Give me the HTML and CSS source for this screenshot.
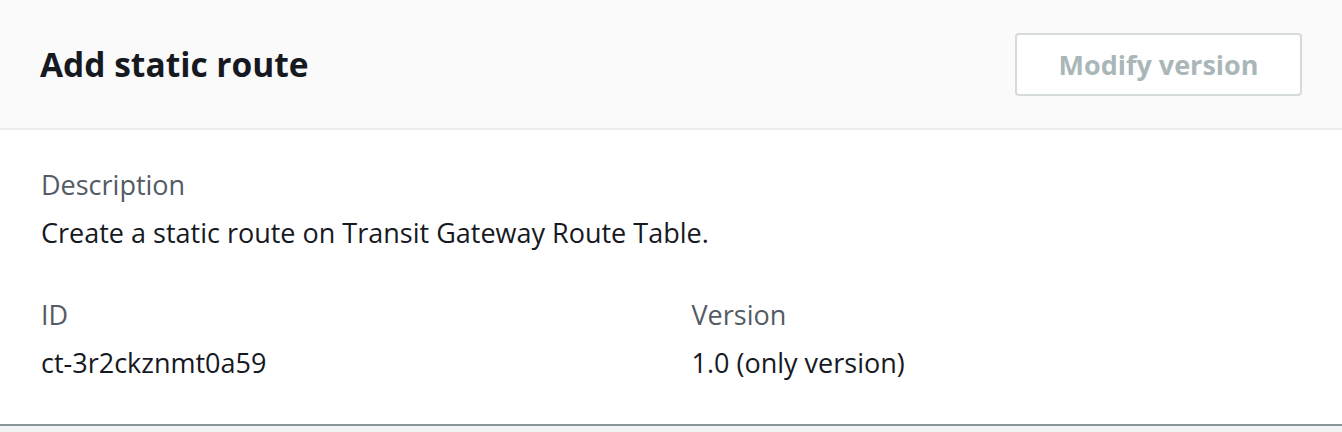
FILE: index.html
```html
<!DOCTYPE html>
<html>
<head>
<meta charset="utf-8">
<link rel="stylesheet" href="styles.css">
</head>
<body>
<div class="panel">
  <div class="panel-header">
    <h2 class="title">Add static route</h2>
    <button class="btn" disabled>Modify version</button>
  </div>
  <div class="panel-body">
    <div class="field">
      <div class="label">Description</div>
      <div class="value">Create a static route on Transit Gateway Route Table.</div>
    </div>
    <div class="grid">
      <div class="field">
        <div class="label">ID</div>
        <div class="value">ct-3r2ckznmt0a59</div>
      </div>
      <div class="field">
        <div class="label">Version</div>
        <div class="value">1.0 (only version)</div>
      </div>
    </div>
  </div>
</div>
</body>
</html>
```
FILE: styles.css
```css
html, body {
  margin: 0;
  padding: 0;
  background: #f2f3f3;
  font-family: "Open Sans", "Noto Sans", sans-serif;
}
.panel {
  background: #fff;
  border-bottom: 2px solid #879596;
  box-shadow: 0 2px 2px rgba(0, 28, 36, 0.12);
}
.panel-header {
  height: 130px;
  box-sizing: border-box;
  background: #fafafa;
  border-bottom: 2px solid #eaeded;
  display: flex;
  align-items: center;
  justify-content: space-between;
  padding: 0 40px 0 40px;
}
.title {
  margin: 0;
  font-size: 33.5px;
  font-weight: 700;
  color: #16191f;
}
.btn {
  width: 287px;
  height: 63px;
  box-sizing: border-box;
  border: 2px solid #d5dbdb;
  border-radius: 4px;
  background: #fff;
  color: #aab7b8;
  font-family: inherit;
  font-size: 27px;
  font-weight: 700;
  padding: 0;
}
.panel-body {
  padding: 37px 40px 43px 41px;
}
.label {
  font-size: 27px;
  color: #545b64;
  line-height: 36px;
}
.value {
  font-size: 27px;
  color: #16191f;
  line-height: 36px;
  margin-top: 12px;
}
.grid {
  display: grid;
  grid-template-columns: 1fr 1fr;
  column-gap: 40px;
  margin-top: 46px;
}
```
